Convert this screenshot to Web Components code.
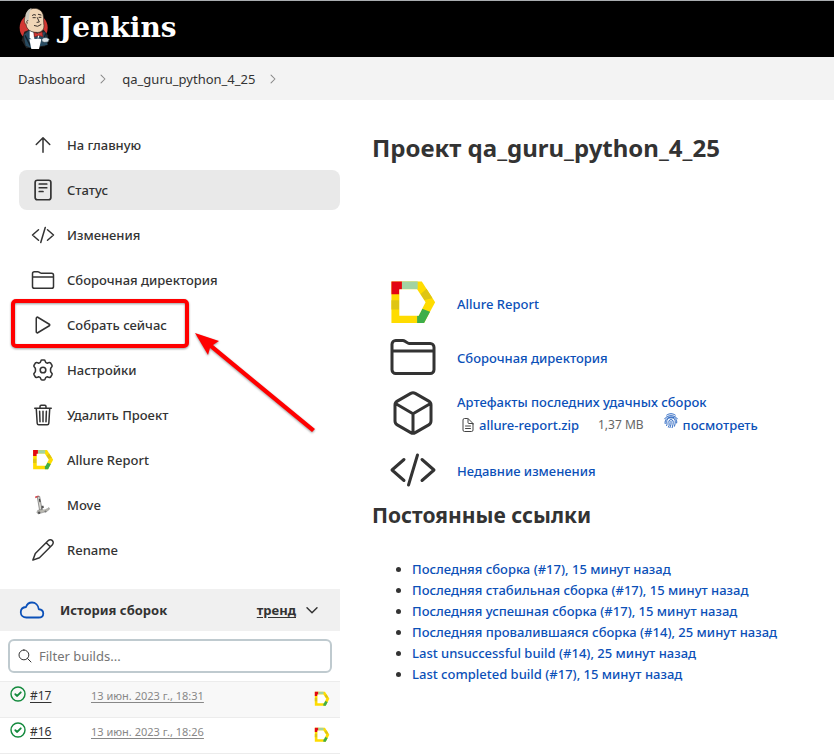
<!DOCTYPE html>
<html lang="ru">
<head>
<meta charset="utf-8">
<meta name="viewport" content="width=device-width, initial-scale=1">
<title>qa_guru_python_4_25 [Jenkins]</title>
<style>
  html { height: 100%; overflow: hidden; }
  body { margin: 0; min-height: 100%; background: #fff; color: #333; font: 14px/20px "Noto Sans", "Open Sans", sans-serif; }
</style>
</head>
<body>
<jk-page>
  <jk-header slot="header">Jenkins</jk-header>
  <jk-breadcrumbs slot="crumbs">
    <jk-crumb>Dashboard</jk-crumb>
    <jk-crumb>qa_guru_python_4_25</jk-crumb>
  </jk-breadcrumbs>
  <jk-tasks slot="side">
    <jk-task icon="up">На главную</jk-task>
    <jk-task icon="status" active>Статус</jk-task>
    <jk-task icon="code">Изменения</jk-task>
    <jk-task icon="folder">Сборочная директория</jk-task>
    <jk-task icon="play">Собрать сейчас<jk-callout slot="over"></jk-callout></jk-task>
    <jk-task icon="gear">Настройки</jk-task>
    <jk-task icon="trash">Удалить Проект</jk-task>
    <jk-task icon="allure">Allure Report</jk-task>
    <jk-task icon="move">Move</jk-task>
    <jk-task icon="pencil">Rename</jk-task>
  </jk-tasks>
  <jk-history slot="side">
    <jk-build number="#17">13 июн. 2023 г., 18:31</jk-build>
    <jk-build number="#16">13 июн. 2023 г., 18:26</jk-build>
  </jk-history>
  <jk-project heading="Проект qa_guru_python_4_25">
    <jk-summary icon="allure"><jk-link>Allure Report</jk-link></jk-summary>
    <jk-summary icon="folder"><jk-link>Сборочная директория</jk-link></jk-summary>
    <jk-summary icon="cube"><jk-link>Артефакты последних удачных сборок</jk-link>
      <jk-artifact size="1,37 MB" action="посмотреть">allure-report.zip</jk-artifact></jk-summary>
    <jk-summary icon="code"><jk-link>Недавние изменения</jk-link></jk-summary>
    <jk-permalinks slot="links" heading="Постоянные ссылки">
      <jk-permalink>Последняя сборка (#17), 15 минут назад</jk-permalink>
      <jk-permalink>Последняя стабильная сборка (#17), 15 минут назад</jk-permalink>
      <jk-permalink>Последняя успешная сборка (#17), 15 минут назад</jk-permalink>
      <jk-permalink>Последняя провалившаяся сборка (#14), 25 минут назад</jk-permalink>
      <jk-permalink>Last unsuccessful build (#14), 25 минут назад</jk-permalink>
      <jk-permalink>Last completed build (#17), 15 минут назад</jk-permalink>
    </jk-permalinks>
  </jk-project>
</jk-page>

<script>
const line = (body, w = 32) => `<g fill="none" stroke="currentColor" stroke-width="${w}" stroke-linecap="round" stroke-linejoin="round">${body}</g>`;
const ICONS = {
  up: line('<path d="M112 244 256 100l144 144M256 120v292"/>'),
  status: line('<rect x="88" y="48" width="336" height="416" rx="48"/><path d="M176 128h160M176 208h160M176 288h80"/>', 36),
  code: line('<path d="M160 368 32 256l128-112M352 368l128-112-128-112M304 96l-96 320"/>'),
  folder: line('<path d="M440 432H72a40 40 0 0 1-40-40V120a40 40 0 0 1 40-40h75.9a40 40 0 0 1 22.200 6.700l27.800 18.600a40 40 0 0 0 22.200 6.700H440a40 40 0 0 1 40 40v240a40 40 0 0 1-40 40zM32 192h448"/>'),
  play: line('<path d="M112 111v290c0 17.400 17 28.500 31 20.200l247.900-149.400c12.100-7.300 12.100-24.300 0-31.600L143 90.800c-14-8.300-31 2.800-31 20.200z"/>'),
  gear: line('<circle cx="256" cy="256" r="60"/><path d="M212 62Q216 44 234 44H278Q296 44 300 62Q308 104 346 112Q378 94 400 98Q416 100 424 116L448 158Q456 176 442 188Q412 212 416 256Q412 300 442 324Q456 336 448 354L424 396Q416 412 400 414Q378 418 346 400Q308 408 300 450Q296 468 278 468H234Q216 468 212 450Q204 408 166 400Q134 418 112 414Q96 412 88 396L64 354Q56 336 70 324Q100 300 96 256Q100 212 70 188Q56 176 64 158L88 116Q96 100 112 98Q134 94 166 112Q204 104 212 62Z"/>', 34),
  trash: line('<path d="m112 112 20 320c1 18.500 14.400 32 32 32h184c17.700 0 30.900-13.500 32-32l20-320M80 112h352M192 112V72a24 24 0 0 1 24-24h80a24 24 0 0 1 24 24v40M256 176v224M184 176l8 224M328 176l-8 224"/>'),
  pencil: line('<path d="M364 60 92 332 40 472l140-52 272-272c64-64-24-152-88-88zM324 100l88 88"/>'),
  cube: line('<path d="M448 341.400V170.600a48 48 0 0 0-24-41.500l-144-82a48 48 0 0 0-48 0l-144 82a48 48 0 0 0-24 41.500v170.800a48 48 0 0 0 24 41.500l144 82a48 48 0 0 0 48 0l144-82a48 48 0 0 0 24-41.500zM69 153.900 256 264l187-110.100M256 463.500V264"/>'),
  cloud: line('<path d="M400 240c-8.900-89.500-71-144-144-144-69 0-113.400 48.200-128 96-60 6-112 43.600-112 112 0 66 54 112 120 112h260c55 0 100-27.400 100-88 0-59.800-53-85.800-96-88z"/>', 38),
  search: line('<path d="M221 64a157 157 0 1 0 157 157A157 157 0 0 0 221 64zM338 338l110 110"/>'),
  doc: line('<path d="M416 221.300V416a48 48 0 0 1-48 48H144a48 48 0 0 1-48-48V96a48 48 0 0 1 48-48h98.700a32 32 0 0 1 22.700 9.400l141.200 141.200a32 32 0 0 1 9.400 22.700zM256 56v120a32 32 0 0 0 32 32h120M176 288h160M176 368h160"/>'),
  right: line('<path d="m184 112 144 144-144 144"/>', 38),
  down: line('<path d="m96 184 160 160 160-160"/>', 46),
  ok: line('<circle cx="256" cy="256" r="224"/><path stroke-width="60" d="m170 264 60 54 114-116"/>', 46),
  finger: line('<path d="M120 66C200 8 312 8 392 66M54 186C130 50 382 50 458 186M68 338C20 60 492 60 438 318M118 402C150 340 106 300 124 232 152 128 360 128 388 232 400 300 384 370 366 424M176 452C226 372 176 318 190 256 204 196 308 196 322 256 334 330 316 400 292 470M256 268c8 80-4 140-34 200"/>', 28),
  allure: '<path fill="#ffdc00" d="M26 26h324l142 222-118 222H26z"/><path fill="#e30613" d="M26 26h112v88h-28v48H26z"/><path fill="#a2d3a2" d="M138 26h168v84H138z"/><path fill="#dfc513" d="M26 226h84v100H26zM335 163l65-59 64 100-89 21z"/><path fill="#3dae49" d="M300 392h16l38-74 84 32-64 120h-74z"/><path fill="#fff" d="M110 110h190l90 138-74 144H110z"/>',
  move: '<path fill="#d9434b" d="M72 58 150 32l20 32-92 34z"/><path fill="#d9d8d2" stroke="#777" stroke-width="18" d="m124 68 54-12 54 300-56 20z"/><path fill="#444" d="m158 116 28-6 15 78-28 4z"/><path fill="#555" d="m222 274 46 0 16 108-68 10z"/><path fill="#b9b8b0" stroke="#888" stroke-width="14" d="m136 378 222-34 36-28 14 36-62 52-200 58-34-30z"/><path fill="#fff" d="m240 332 80-20 22 38-88 16z"/><circle cx="166" cy="436" r="28" fill="#555"/><circle cx="314" cy="406" r="24" fill="#777"/>'
};
const define = (name, css, html, setup) => customElements.define(name, class extends HTMLElement {
  constructor() {
    super();
    const template = document.createElement('template');
    template.innerHTML = `<style>:host,*{box-sizing:border-box}a{color:inherit;text-decoration:none}${css}</style>${html}`;
    this.attachShadow({ mode: 'open' }).append(template.content.cloneNode(true));
  }
  connectedCallback() { setup?.(this, this.shadowRoot); }
});

define('jk-icon', ':host{display:block;flex:none;width:24px;height:24px}svg{display:block;width:100%;height:100%;overflow:visible}',
  '<svg viewBox="0 0 512 512" aria-hidden="true"></svg>',
  (el, root) => { root.querySelector('svg').innerHTML = ICONS[el.getAttribute('name')] || ''; });

define('jk-page', `:host{display:block}
  .body{display:grid;grid-template-columns:340px minmax(0,1fr);align-items:start}
  main{padding:30px 16px 0 32px}`,
  `<slot name="header"></slot><slot name="crumbs"></slot>
   <div class="body"><aside><slot name="side"></slot></aside><main><slot></slot></main></div>`);

define('jk-header', `:host{display:block}
  header{height:57px;background:#000;border-top:1px solid #a9adb0;padding:0 18px}
  a{display:inline-flex;align-items:center;gap:9px;color:#fff;font:bold 28px/54px "DejaVu Serif",serif}
  svg{width:32px;height:42px}`,
  `<header><a href="#"><svg viewBox="9 6 96 126" aria-hidden="true">
    <ellipse cx="56" cy="68" rx="42" ry="42" fill="#d33833"/>
    <path fill="#222" d="M20 106 28 80l20-8 38 2 14 18-10 32-56 6z"/>
    <path fill="#284b61" d="m26 90 18-16 24 10 24-2 6 38-52 8-14-6z"/>
    <path fill="#f0d6b7" stroke="#332c24" stroke-width="2" d="M32 30C36 6 76 2 84 28c3 12 1 22 3 34 0 14-10 22-24 20-15 0-28-8-30-24-7-6-5-16-1-28z"/>
    <path fill="#ccc8bd" d="M32 30c4-14 12-20 18-20-7 9-7 18-8 28l-2 12-8-3z"/>
    <path fill="none" stroke="#38302b" stroke-width="3" stroke-linecap="round" d="M52 31q5-5 10-1M70 28l8 2M54 38h7M72 37h6M67 38l6 13-7 1M58 62q10 6 20-3M38 46q-5 2-2 9"/>
    <path fill="#fff" d="m44 78 12 5 3 26-15-10zM69 84l8 0-9 20z"/>
    <path fill="#d33833" stroke="#7b1e1b" stroke-width="2" d="m57 82 12 4 12-6 3 15-13-4-13 5z"/>
    <path fill="none" stroke="#101e28" stroke-width="4" d="m30 91 16 31M92 85l-8 26"/>
    <path fill="#fff" d="m43 103 31-2 5 2-7 29H49z"/>
    <path fill="#dbe3e8" stroke="#354852" stroke-width="2" d="m80 104 6-6 10 0 7 5-4 8-11 1-6-2z"/>
  </svg><slot></slot></a></header>`);

define('jk-breadcrumbs', ':host{display:block}nav{display:flex;height:43px;align-items:center;padding:0 18px;background:#f3f3f3;font-size:13px}',
  '<nav aria-label="Breadcrumbs"><slot></slot></nav>');
define('jk-crumb', ':host{display:flex;align-items:center;gap:11px;margin-right:12px}jk-icon{width:14px;height:14px;color:#888}',
  '<a href="#"><slot></slot></a><jk-icon name="right"></jk-icon>');

define('jk-tasks', ':host{display:block}nav{display:flex;flex-direction:column;gap:5px;padding:25px 0 19px 19px}',
  '<nav aria-label="Project"><slot></slot></nav>');
define('jk-task', `:host{display:block;position:relative}
  a{display:flex;align-items:center;gap:12px;height:40px;padding:0 12px;border-radius:8px;font-size:13px;font-weight:500}
  :host([active]) a{background:#e9e9e9}`,
  '<a href="#"><jk-icon></jk-icon><span><slot></slot></span></a><slot name="over"></slot>',
  (el, root) => { const i = root.querySelector('jk-icon'); i.setAttribute('name', el.getAttribute('icon'));
    if (['allure', 'move'].includes(el.getAttribute('icon'))) i.style.padding = '1px';
    i.connectedCallback(); });

define('jk-callout', `:host{position:absolute;left:-8px;top:-6px;z-index:2;pointer-events:none}
  .frame{width:178px;height:49px;border:4px solid #f00;border-radius:5px;filter:drop-shadow(0 1px 1px #0006)}
  svg{position:absolute;left:184px;top:34px;width:120px;height:100px;overflow:visible;filter:drop-shadow(0 1px 1px #0006)}`,
  '<div class="frame"></div><svg viewBox="0 0 120 100" aria-hidden="true"><path fill="red" d="M0 0 24 8 18 12 120 96 117 99 15 15 13 22z"/></svg>');

define('jk-history', `:host{display:block}
  header{display:flex;align-items:center;height:42px;padding:0 20px;background:#f0f0f0;font-size:13px;font-weight:700}
  header jk-icon{color:#0b50b8;margin-right:16px}
  h2{margin:0;font:inherit;flex:1}.trend{text-decoration:underline;text-underline-offset:2px}
  button{display:flex;padding:0;margin-left:8px;border:0;background:none;color:#333}button jk-icon{width:16px;height:16px;color:#333;margin:0}
  label{display:flex;align-items:center;gap:6px;height:34px;margin:8px 8px 8px 8px;padding:0 7px;border:2px solid #bfcacf;border-radius:6px}
  label jk-icon{width:16px;height:16px}
  input{flex:1;min-width:0;border:0;padding:0;outline:0;background:none;color:#333;font:13px/20px "Noto Sans",sans-serif}
  input::placeholder{color:#757575;opacity:1}`,
  `<header><jk-icon name="cloud"></jk-icon><h2>История сборок</h2><a class="trend" href="#">тренд</a>
   <button type="button" aria-label="Свернуть"><jk-icon name="down"></jk-icon></button></header>
   <label><jk-icon name="search"></jk-icon><input type="search" placeholder="Filter builds..." aria-label="Filter builds"></label>
   <slot></slot>`);
define('jk-build', `:host{display:flex;height:36px;align-items:flex-start;padding:4px 10px 0 10px;border-top:1px solid #ececec;font-size:12px;background:#fff}
  :host(:nth-of-type(odd)){background:#f8f8f8}:host(:last-of-type){height:37px;border-bottom:1px solid #ececec}
  jk-icon{width:16px;height:16px}.ok{color:#138a3d}
  a{text-decoration:underline;text-underline-offset:2px}
  .number{width:65px;padding-left:4px}.date{flex:1;color:#888;font-size:11px}.report{margin-top:5px}`,
  '<jk-icon class="ok" name="ok"></jk-icon><span class="number"><a href="#" class="n"></a></span><span class="date"><a href="#"><slot></slot></a></span><a class="report" href="#" aria-label="Allure Report"><jk-icon name="allure"></jk-icon></a>',
  (el, root) => { root.querySelector('.n').textContent = el.getAttribute('number'); });

define('jk-project', `:host{display:block}h1{margin:0 0 110px;font-size:24px;line-height:36px;font-weight:700}
  .rows{display:grid;grid-template-rows:54px 54px 58px 56px;padding-left:17px}`,
  '<h1></h1><div class="rows"><slot></slot></div><slot name="links"></slot>',
  (el, root) => { root.querySelector('h1').textContent = el.getAttribute('heading'); });
define('jk-summary', ':host{display:flex;align-items:center;gap:20px}jk-icon{width:48px;height:48px}.text{padding-top:2px}',
  '<jk-icon></jk-icon><div class="text"><slot></slot></div>',
  (el, root) => { const i = root.querySelector('jk-icon'); i.setAttribute('name', el.getAttribute('icon')); i.connectedCallback(); });
define('jk-link', ':host{display:block;font-size:13px;font-weight:500;line-height:22px;color:#0b50b8}',
  '<a href="#"><slot></slot></a>');
define('jk-artifact', `:host{display:flex;align-items:center;font-size:13px;font-weight:500;line-height:24px;color:#0b50b8;padding-left:3px}
  jk-icon{width:16px;height:16px;margin-right:3px}.doc{color:#444}.size{margin:0 19px;font-size:12px;font-weight:400;color:#666}
  .print{align-self:flex-start;margin-right:4px}`,
  '<jk-icon class="doc" name="doc"></jk-icon><a href="#"><slot></slot></a><span class="size"></span><jk-icon class="print" name="finger"></jk-icon><a class="view" href="#"></a>',
  (el, root) => { root.querySelector('.size').textContent = el.getAttribute('size'); root.querySelector('.view').textContent = el.getAttribute('action'); });
define('jk-permalinks', ':host{display:block}h2{margin:2px 0 29px;font-size:21px;line-height:30px;font-weight:700}.list{padding-left:40px}',
  '<h2></h2><div class="list" role="list"><slot></slot></div>',
  (el, root) => { root.querySelector('h2').textContent = el.getAttribute('heading'); el.querySelectorAll('jk-permalink').forEach(x => x.setAttribute('role', 'listitem')); });
define('jk-permalink', ':host{display:list-item;list-style:disc;font-size:13px;line-height:21px;font-weight:500}a{color:#0b50b8}',
  '<a href="#"><slot></slot></a>');
</script>
</body>
</html>
